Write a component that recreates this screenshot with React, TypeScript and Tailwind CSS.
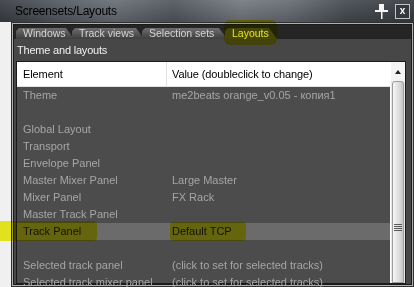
import React from 'react'

type Row = { name: string; value: string; selected?: boolean }

const rows: Row[] = [
    { name: 'Theme', value: 'me2beats orange_v0.05 - копия1' },
    { name: '', value: '' },
    { name: 'Global Layout', value: '' },
    { name: 'Transport', value: '' },
    { name: 'Envelope Panel', value: '' },
    { name: 'Master Mixer Panel', value: 'Large Master' },
    { name: 'Mixer Panel', value: 'FX Rack' },
    { name: 'Master Track Panel', value: '' },
    { name: 'Track Panel', value: 'Default TCP', selected: true },
    { name: '', value: '' },
    { name: 'Selected track panel', value: '(click to set for selected tracks)' },
    { name: 'Selected track mixer panel', value: '(click to set for selected tracks)' },
]

const tabs = [
    { label: 'Windows', w: 'w-[58px]' },
    { label: 'Track views', w: 'w-[72px]' },
    { label: 'Selection sets', w: 'w-[85px]' },
    { label: 'Layouts', w: 'w-[52px]', active: true },
]

function PinIcon() {
    return (
        <svg width="15" height="16" viewBox="0 0 15 16" className="block">
            <rect x="5" y="1" width="5" height="6" fill="#f4f4f4" />
            <rect x="1" y="7" width="13" height="2" fill="#f4f4f4" />
            <rect x="7" y="9" width="1.5" height="7" fill="#f4f4f4" />
        </svg>
    )
}

export default function App() {
    return (
        <div className="relative w-[414px] h-[287px] overflow-hidden bg-[#f0f0f0] font-['Liberation_Sans',Arial,sans-serif]">
            {/* Title bar */}
            <div className="h-[22px] flex items-center pl-[15px] pr-[4px] bg-[linear-gradient(180deg,rgba(255,255,255,0.06),rgba(0,0,0,0.18)),linear-gradient(90deg,#3c4046_0%,#585d64_14%,#6c7178_28%,#555a61_42%,#777c83_58%,#6a6f76_70%,#484d53_84%,#3a3e44_100%)]">
                <span className="text-[12px] tracking-[-0.2px] text-black leading-none">Screensets/Layouts</span>
                <div className="ml-auto flex items-center gap-[6px]">
                    <PinIcon />
                    <div className="w-[15px] h-[15px] border border-[#c4c4c4] bg-[#35383c] flex items-center justify-center text-white text-[10px] font-bold leading-none">
                        x
                    </div>
                </div>
            </div>

            <div className="flex h-[265px]">
                <div className="w-[11px] bg-[#f0f0f0]" />
                {/* Frame */}
                <div className="flex-1 border border-[#303030] bg-[#b0b0b0] p-px">
                    <div className="h-full border border-[#1a1a1a] bg-[#474747] flex flex-col">
                        {/* Tabs strip */}
                        <div className="h-[14px] bg-[#252525] flex items-end pl-[2px]">
                            {tabs.map((t) => (
                                <div
                                    key={t.label}
                                    className={`${t.w} h-[11px] -mr-[2px] pl-[7px] flex items-center text-[10.5px] leading-none rounded-tl-[4px] [clip-path:polygon(0_100%,0_3px,3px_0,calc(100%_-_8px)_0,100%_100%)] ${
                                        t.active
                                            ? 'bg-[#4a4a4a] text-[#f4f4f4]'
                                            : 'bg-[linear-gradient(180deg,#6e6e6e,#3e3e3e)] text-[#d4d4d4]'
                                    }`}
                                >
                                    {t.label}
                                </div>
                            ))}
                        </div>

                        {/* Section title */}
                        <div className="h-[22px] flex items-center pl-[3px] text-[11px] tracking-[-0.2px] text-[#f0f0f0]">
                            Theme and layouts
                        </div>

                        {/* List */}
                        <div className="flex-1 ml-[2px] mr-[5px] border border-[#1a1a1a] flex min-h-0">
                            <div className="flex-1 flex flex-col bg-[#4c4c4c] min-w-0">
                                <div className="h-[25px] shrink-0 flex bg-white border-b border-[#e2e2e2] text-[11px] tracking-[-0.1px] text-black">
                                    <div className="w-[150px] border-r border-[#e2e2e2] pl-[6px] flex items-center">Element</div>
                                    <div className="flex-1 pl-[5px] flex items-center">Value (doubleclick to change)</div>
                                </div>
                                {rows.map((r, i) => (
                                    <div
                                        key={i}
                                        className={`h-[17px] shrink-0 flex items-center text-[11px] ${
                                            r.selected ? 'bg-[#6b6b6b] text-[#141414]' : 'text-[#a6a6a6]'
                                        }`}
                                    >
                                        <div className="w-[150px] pl-[6px] whitespace-nowrap">{r.name}</div>
                                        <div className="flex-1 pl-[5px] whitespace-nowrap">{r.value}</div>
                                    </div>
                                ))}
                            </div>

                            {/* Scrollbar */}
                            <div className="w-[15px] flex flex-col bg-[#e8e8e8] border-l border-white">
                                <div className="h-[19px] shrink-0 bg-[#f4f4f4] flex items-center justify-center">
                                    <div className="w-0 h-0 border-l-[3.5px] border-r-[3.5px] border-b-[4px] border-l-transparent border-r-transparent border-b-[#202020]" />
                                </div>
                                <div className="flex-1 mx-px rounded-t-[3px] border border-[#9c9c9c] bg-[linear-gradient(90deg,#f6f6f6,#dcdcdc_60%,#c4c4c4)] flex flex-col items-center pt-[142px]">
                                    <div className="w-[8px] flex flex-col gap-[1px]">
                                        <div className="h-px bg-[#5a5a5a]" />
                                        <div className="h-px bg-[#5a5a5a]" />
                                        <div className="h-px bg-[#5a5a5a]" />
                                        <div className="h-px bg-[#5a5a5a]" />
                                    </div>
                                </div>
                            </div>
                        </div>
                    </div>
                </div>
            </div>

            {/* Highlighter marks */}
            <div className="absolute left-[224px] top-[20px] w-[53px] h-[25px] rounded-[6px] bg-[#f0f020] mix-blend-multiply" />
            <div className="absolute left-0 top-[221px] w-[97px] h-[20px] rounded-r-[4px] bg-[#f0f020] mix-blend-multiply" />
            <div className="absolute left-[170px] top-[222px] w-[76px] h-[19px] rounded-[4px] bg-[#f0f020] mix-blend-multiply" />
        </div>
    )
}
